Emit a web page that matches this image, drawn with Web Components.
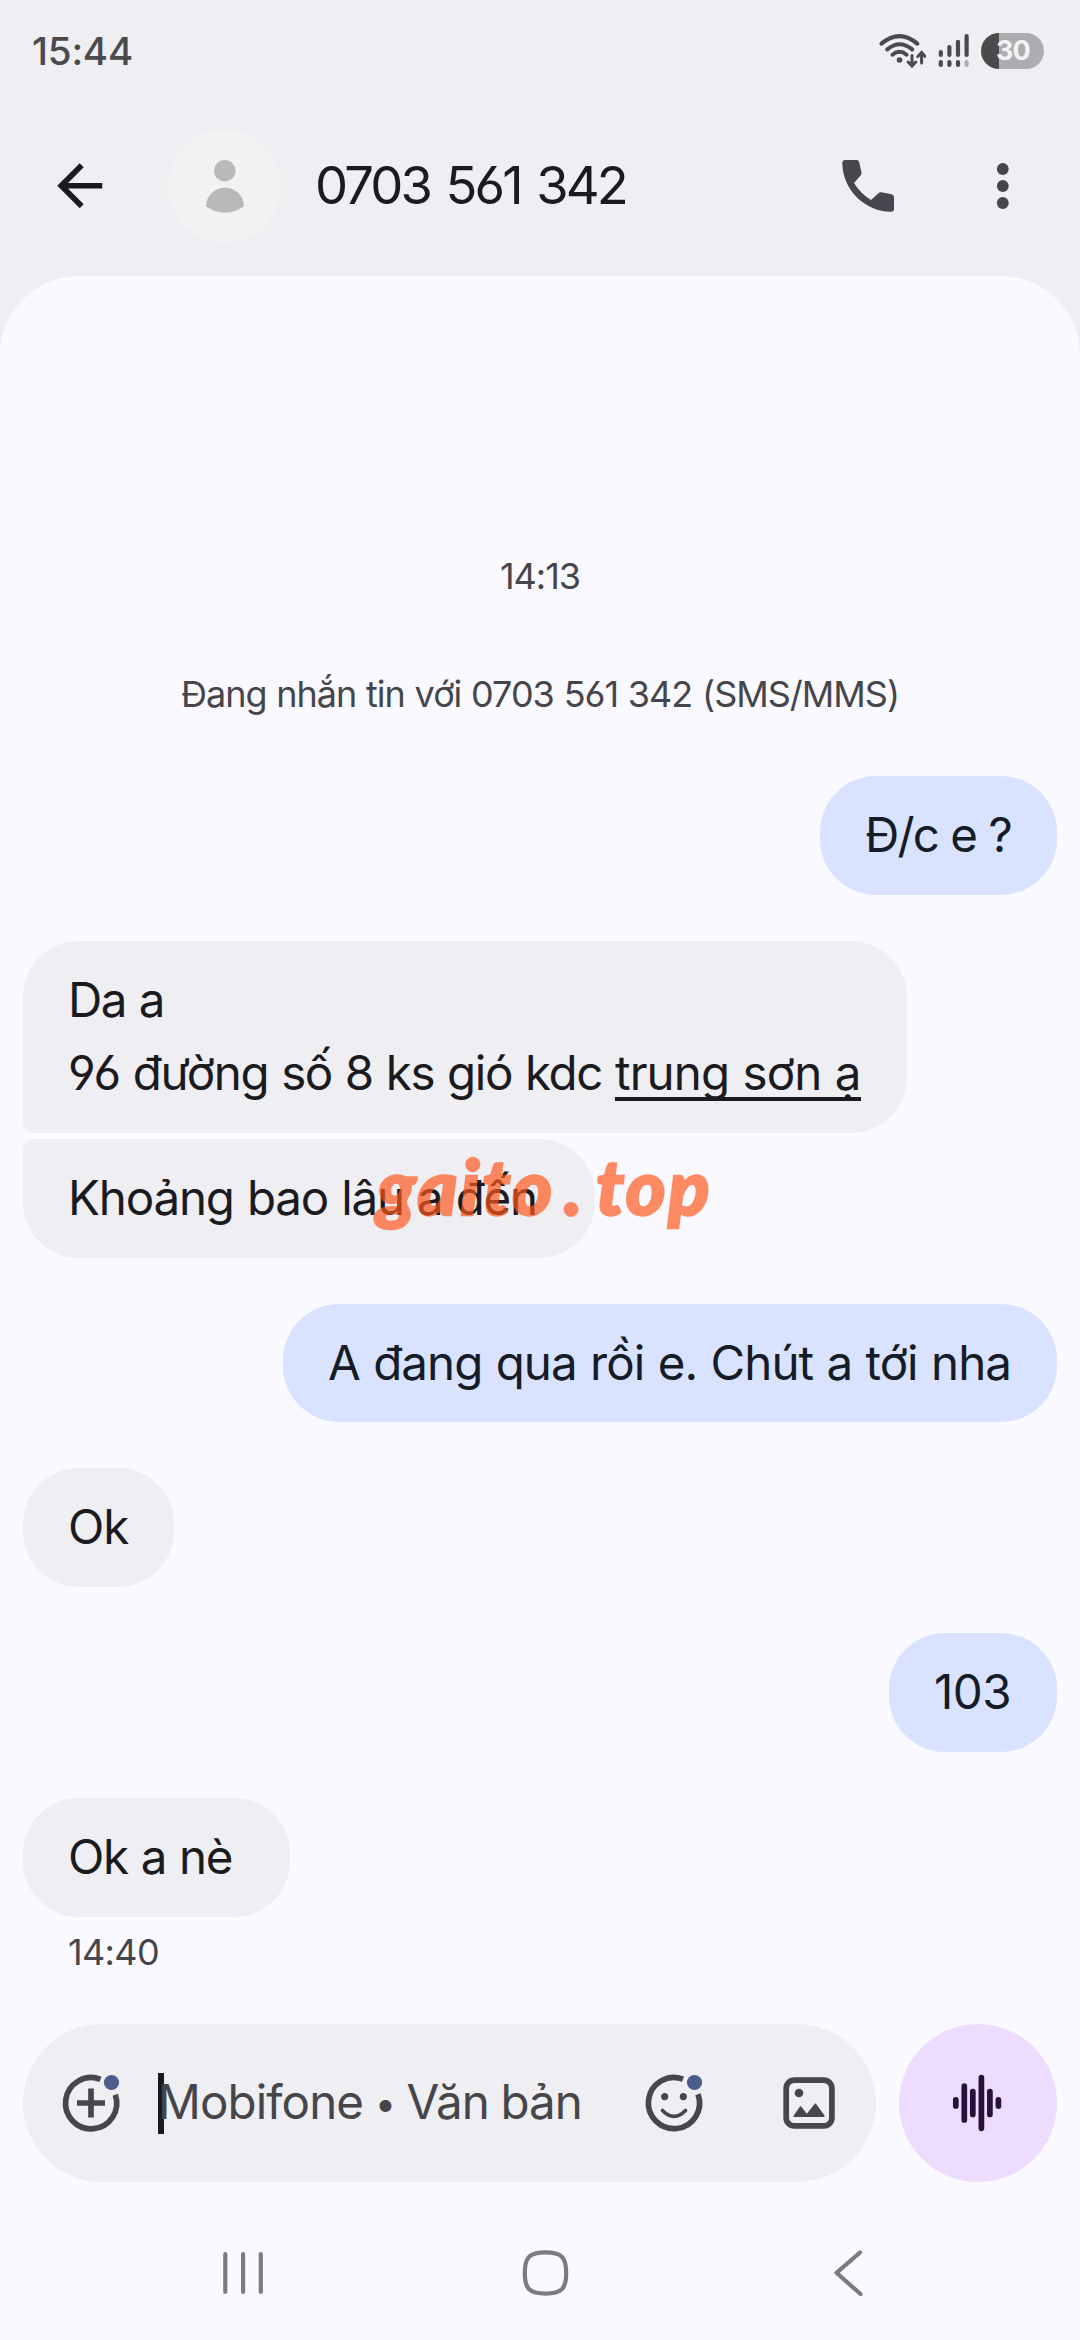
<!DOCTYPE html>
<html lang="vi">
<head>
<meta charset="utf-8">
<title>0703 561 342</title>
<style>
  body { margin: 0; background: #faf9ff; font-family: Inter, Roboto, "Liberation Sans", sans-serif; }
</style>
</head>
<body>
<phone-screen>
  <status-bar slot="top" time="15:44" level="30"></status-bar>
  <chat-header slot="top" name="0703 561 342" fit="311"></chat-header>
  <chat-note fit="80" style="margin-top:278px">14:13</chat-note>
  <chat-note fit="718" style="margin-top:74px">Đang nhắn tin với 0703 561 342 (SMS/MMS)</chat-note>
  <chat-bubble out fit="146" style="margin-top:60px">Đ/c e ?</chat-bubble>
  <chat-bubble head><fit-text fit="96">Da a</fit-text><br><fit-text fit="547">96 đường số 8 ks gió kdc&nbsp;</fit-text><fit-text link fit="245.5">trung sơn ạ</fit-text></chat-bubble>
  <chat-bubble tail trailing fit="469">Khoảng bao lâu a đến</chat-bubble>
  <chat-bubble out fit="683">A đang qua rồi e. Chút a tới nha</chat-bubble>
  <chat-bubble fit="60">Ok</chat-bubble>
  <chat-bubble out fit="77">103</chat-bubble>
  <chat-bubble trailing fit="164">Ok a nè</chat-bubble>
  <chat-time fit="91">14:40</chat-time>
  <compose-bar slot="bottom"></compose-bar>
  <nav-bar slot="bottom"></nav-bar>
  <water-mark slot="overlay"></water-mark>
</phone-screen>

<script>
const define = (name, render, after) => customElements.define(name, class extends HTMLElement {
  connectedCallback() {
    if (this.shadowRoot) return;
    this.attachShadow({ mode: 'open' }).innerHTML = render(this);
    if (after) after(this);
  }
});

define('phone-screen', () => `
  <style>
    :host { display: flex; flex-direction: column; width: 1080px; height: 2340px; position: relative; overflow: hidden; background: #eeeef3; }
    .top { height: 276px; display: flex; flex-direction: column; flex: none; }
    .panel { flex: 1; display: flex; flex-direction: column; background: #faf9ff; border-radius: 79px 79px 0 0; min-height: 0; }
    .list { display: flex; flex-direction: column; align-items: flex-start; height: 1748px; flex: none; }
  </style>
  <div class="top"><slot name="top"></slot></div>
  <div class="panel"><div class="list"><slot></slot></div><slot name="bottom"></slot></div>
  <slot name="overlay"></slot>`);

define('status-bar', el => `
  <style>
    :host { display: flex; align-items: center; height: 102px; padding: 0 36px 0 32px; box-sizing: border-box; color: #4a4a4c; flex: none; }
    .time { font-size: 38.5px; font-weight: 500; flex: 1; line-height: 102px; }
    svg { display: block; }
    .wifi { margin-right: 12px; }
    .signal { margin-right: 12px; }
    .battery { width: 63px; height: 36px; border-radius: 18px; background: linear-gradient(90deg, #4a4a4a 18.5px, #adadb1 18.5px);
      color: #f4f4f6; font: 700 27px/36px Inter, sans-serif; text-align: center; letter-spacing: -.9px; text-indent: 1px; }
  </style>
  <div class="time"><fit-text fit="101">${el.getAttribute('time')}</fit-text></div>
  <svg class="wifi" width="48" height="36" viewBox="877 33 48 36" fill="none" stroke="#4a4a4c" stroke-width="4" stroke-linecap="round">
    <path d="M880.5 43.6Q898.5 28.6 916.3 43.6M886.3 49.4Q898.5 39.2 911.2 49.4M891.5 54.7Q898.5 48.8 905.5 54.7"/>
    <circle cx="898.5" cy="60" r="2.8" fill="#4a4a4c" stroke="none"/>
    <path stroke-width="3" d="M911 55.5V65.5M907.2 62L911 66L914.8 62M920.6 63V53.5M916.8 56.5L920.6 52.5L924 56.3"/>
  </svg>
  <svg class="signal" width="31" height="36" viewBox="937 33 31 36" stroke="#4a4a4c" stroke-width="4.2" stroke-linecap="round">
    <path d="M939.8 52.2V55M948.4 47V55M957 41.8V55M965.6 36V55M939.8 62.2V65M948.4 62.2V65M957 62.2V65"/>
    <path stroke="#adadb1" d="M965.6 62.2V65"/>
  </svg>
  <div class="battery">${el.getAttribute('level')}</div>`);

define('chat-header', el => `
  <style>
    :host { display: flex; align-items: center; height: 168px; padding: 0 37px 0 45.5px; box-sizing: border-box; }
    svg { display: block; flex: none; }
    .avatar { margin-left: 55px; }
    .name { flex: 1; margin-left: 34px; font-size: 52.5px; color: #1b1b1f; line-height: 64px; margin-top: -2px; --gap: .07em; }
    .call { margin-right: 61px; }
  </style>
  <svg width="67.5" height="67.5" viewBox="0 0 24 24"><path fill="#1b1b1f" d="M20 11H7.83l5.59-5.59L12 4l-8 8 8 8 1.41-1.41L7.83 13H20z"/></svg>
  <svg class="avatar" width="113" height="113" viewBox="167.5 129 113 113">
    <circle cx="224" cy="185.5" r="56.5" fill="#f1f2f1"/>
    <g fill="#b8bab9"><circle cx="224.3" cy="169.8" r="10.7"/>
    <path d="M205.6 205.3C205.6 194 214.5 186.7 224.5 186.7S243.4 194 243.4 205.3Q235 211.7 224.5 211.7T205.6 205.3Z"/></g>
  </svg>
  <div class="name"><fit-text fit="${el.getAttribute('fit')}">${el.getAttribute('name')}</fit-text></div>
  <svg class="call" width="68" height="68" viewBox="833 152 68 68"><path fill="#46464f" d="M844 160H855.5Q857.8 160 858.2 162.2L860.5 172.6Q860.8 174.3 859.6 175.5L853 183Q859.5 193.5 870 200L877.4 193.2Q878.7 192 880.3 192.3L890.6 194.3Q893 194.9 893 197.2V209Q893 211.7 890.3 211.7C863 211.7 841.3 189 841.3 162.8Q841.3 160 844 160Z"/></svg>
  <svg width="80" height="68" viewBox="962 152 80 68" fill="#46464a"><circle cx="1001.8" cy="169" r="5.9"/><circle cx="1001.8" cy="186" r="5.9"/><circle cx="1001.8" cy="203" r="5.9"/></svg>`);

define('chat-note', el => `
  <style>
    :host { display: block; align-self: center; font-size: 36px; line-height: 44px; color: #46464a; }
  </style><fit-text fit="${el.getAttribute('fit')}">${el.textContent}</fit-text>`);

define('chat-bubble', el => `
  <style>
    :host { display: block; box-sizing: border-box; margin: 46px 23px 0; padding: 22px 46px 23.5px 45px; font-size: 47.5px; line-height: 73.25px;
      border-radius: 56px; background: #eeeef3; color: #1b1b1f; flex: none; white-space: nowrap; }
    :host([out]) { align-self: flex-end; background: #d9e2ff; color: #151b27; }
    :host([head]) { border-bottom-left-radius: 11px; }
    :host([tail]) { margin-top: 6px; border-top-left-radius: 11px; }
    :host([trailing]) { padding-right: 58px; }
  </style>${el.hasAttribute('fit') ? `<fit-text fit="${el.getAttribute('fit')}">${el.textContent}</fit-text>` : '<slot></slot>'}`);

define('chat-time', el => `
  <style>:host { display: block; margin: 13px 0 0 68px; font-size: 36px; line-height: 44px; color: #46464a; }</style>
  <fit-text fit="${el.getAttribute('fit')}">${el.textContent}</fit-text>`);

define('compose-bar', () => `
  <style>
    :host { display: flex; gap: 23px; padding: 0 23px; height: 158px; flex: none; }
    .field { flex: 1; display: flex; align-items: center; border-radius: 79px; background: #eeeef3; padding: 0 33px 0 34px; }
    .hint { flex: 1; display: flex; align-items: center; margin-left: 33px; font-size: 47.5px; line-height: 61px; color: #46464a; --gap: -.02em; }
    .hint fit-text { margin-top: -3px; }
    .caret { width: 6px; height: 61px; background: #1b1b1f; margin-right: -6px; }
    .dot { font-size: 38px; line-height: 1; vertical-align: 2px; }
    .voice { width: 158px; border-radius: 50%; background: #eedcff; display: grid; place-items: center; }
    svg { display: block; flex: none; }
    .smile { margin-right: 67px; }
  </style>
  <div class="field">
    <svg width="68" height="68" viewBox="57 2069 68 68" fill="none" stroke="#46464f" stroke-width="5.7">
      <path d="M100.5 2079.4A25.6 25.6 0 1 0 115.3 2094.8M91 2088.5V2117.5M77 2103H105"/>
      <circle cx="111.5" cy="2082.5" r="7.6" fill="#4c5c8c" stroke="none"/></svg>
    <div class="hint"><i class="caret"></i><fit-text fit="424">Mobifone <span class="dot">•</span> Văn bản</fit-text></div>
    <svg class="smile" width="68" height="68" viewBox="640 2069 68 68" fill="none" stroke="#46464f" stroke-width="5.7">
      <path d="M683 2079.1A25.6 25.6 0 1 0 698 2094.2"/>
      <path stroke-width="3.6" stroke-linecap="round" d="M662.5 2110.5Q674 2122.3 685.5 2110.5"/>
      <g fill="#46464f" stroke="none"><circle cx="664.7" cy="2096.6" r="3.6"/><circle cx="683.3" cy="2096.6" r="3.6"/></g>
      <circle cx="694.5" cy="2082.5" r="7.6" fill="#4c5c8c" stroke="none"/></svg>
    <svg width="68" height="68" viewBox="775 2069 68 68" fill="#46464f">
      <rect x="786.2" y="2080.2" width="45.7" height="45.7" rx="8" fill="none" stroke="#46464f" stroke-width="5.7"/>
      <circle cx="799" cy="2093" r="4.3"/>
      <path d="M793.7 2115.5L800 2106.6Q800.6 2105.9 801.2 2106.6L806.8 2113.8L814.8 2103.7Q815.4 2103 816 2103.7L824.5 2115.5Q825 2117 823.8 2117H794.2Q793 2117 793.7 2115.5Z"/></svg>
  </div>
  <div class="voice"><svg width="60" height="60" viewBox="947.5 2073 60 60" stroke="#26123a" stroke-width="5.7" stroke-linecap="round">
    <path d="M955.3 2099.8V2106M963.8 2086V2120M972.3 2091.5V2114.5M980.9 2077.7V2128.3M989.4 2091.5V2114.5M997.9 2099.8V2106"/></svg></div>`);

define('nav-bar', () => `
  <style>
    :host { display: flex; justify-content: space-between; align-items: center; flex: 1; padding: 24px 200px 0 213px; }
    svg { display: block; }
  </style>
  <svg width="60" height="60" viewBox="213 2243 60 60" stroke="#7c7c80" stroke-width="4.2" stroke-linecap="round"><path d="M225.3 2254V2292M243.1 2254V2292M260.8 2254V2292"/></svg>
  <svg width="60" height="60" viewBox="516.5 2243 60 60"><path fill="none" stroke="#7c7c80" stroke-width="4.2" d="M545 2252.4C561 2252.4 565.7 2257 565.7 2273S561 2293.6 545 2293.6 524.3 2289 524.3 2273 529 2252.4 545 2252.4Z"/></svg>
  <svg width="60" height="60" viewBox="820 2243 60 60" fill="none" stroke="#7c7c80" stroke-width="4.2" stroke-linecap="round" stroke-linejoin="round"><path d="M860 2252.5L836.5 2272.8L860.5 2294"/></svg>`);

define('water-mark', () => `
  <style>
    :host { position: absolute; left: 377px; top: 1140px; display: flex; font: italic 900 76px/92px Lato, sans-serif;
      color: #ff561a; -webkit-text-stroke: 2.4px #ff561a; opacity: .68; }
    .b { margin-left: 9px; } .c { margin-left: 10px; }
  </style>
  <fit-text fit="178">gaito</fit-text><fit-text class="b" fit="22">.</fit-text><fit-text class="c" fit="116">top</fit-text>`);

/* Inline text tracked so that it takes up a given advance width.
   Registered last, so that every host around it already has its font. */
define('fit-text', () => `
  <style>
    :host { display: inline-block; white-space: nowrap; word-spacing: var(--gap, .02em); font-feature-settings: "cv03", "cv04"; }
    :host([link]) { background: linear-gradient(#1b1b1f, #1b1b1f) 0 61px / 100% 4px no-repeat; }
  </style><slot></slot>`,
  el => {
    const target = parseFloat(el.getAttribute('fit'));
    const n = [...el.textContent].length;
    const w = el.getBoundingClientRect().width;
    el.style.letterSpacing = ((target - w) / n).toFixed(3) + 'px';
  });
</script>
</body>
</html>
